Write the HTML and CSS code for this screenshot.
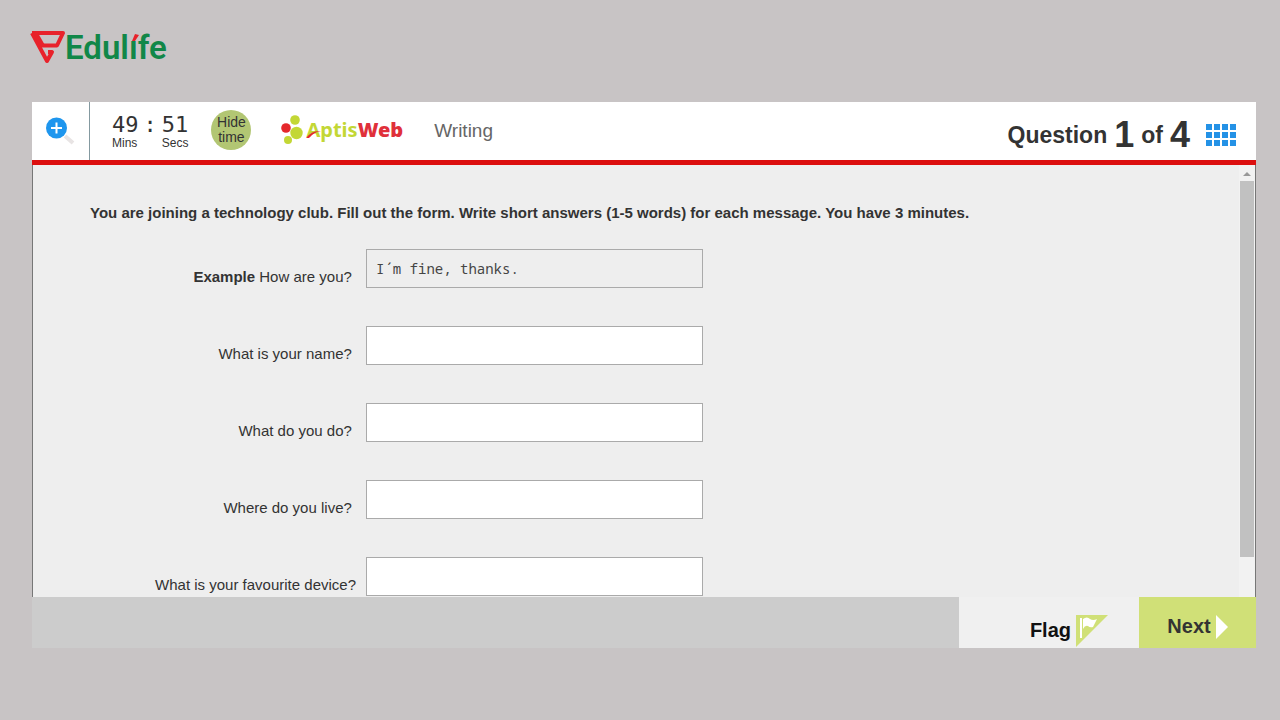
FILE: index.html
```html
<!DOCTYPE html>
<html lang="en">

<head>
    <meta charset="UTF-8">
    <meta name="viewport" content="width=device-width, initial-scale=1.0">
    <title>AptisWeb - Writing</title>
    <link rel="stylesheet" href="styles.css">
</head>

<body>
    <a class="brand" href="#" aria-label="Edulife">
        <svg class="brand-icon" width="38" height="34" viewBox="0 0 38 34" aria-hidden="true">
            <path d="M3 3H34L28 15.500H12" fill="none" stroke="#e8222b" stroke-width="4" stroke-linejoin="round" />
            <path d="M3 3L18 31L23 22H19" fill="none" stroke="#e8222b" stroke-width="4" stroke-linejoin="round" />
            <path d="M4 3H9L17 17H11Z" fill="#e8222b" />
        </svg>
        <span class="brand-name">Edul<span class="brand-i">ı<svg class="brand-accent" width="8" height="8" viewBox="0 0 8 8" aria-hidden="true"><path d="M4 0L8 1L4 7L1 7Z" fill="#e8222b" /></svg></span>fe</span>
    </a>

    <main class="test">
        <header class="test-header">
            <button class="zoom-btn" type="button" aria-label="Zoom">
                <svg width="30" height="30" viewBox="0 0 30 30" aria-hidden="true">
                    <path d="M19 20L27 27" stroke="#e8e4e4" stroke-width="4" />
                    <circle cx="10.500" cy="12" r="10.500" fill="#1e96ee" />
                    <path d="M10.500 6.500V17.500M5 12H16" stroke="#fff" stroke-width="2" />
                </svg>
            </button>
            <div class="timer">
                <div class="timer-part"><span class="digits">49</span><span class="unit">Mins</span></div>
                <span class="digits">:</span>
                <div class="timer-part"><span class="digits">51</span><span class="unit">Secs</span></div>
            </div>
            <button class="hide-btn" type="button">Hide time</button>
            <div class="aptis">
                <svg width="24" height="30" viewBox="0 0 24 30" aria-hidden="true">
                    <circle cx="5" cy="14" r="4.800" fill="#e5282c" />
                    <circle cx="14" cy="6" r="4.800" fill="#c3d735" />
                    <circle cx="15.500" cy="19" r="6.200" fill="#c3d735" />
                    <circle cx="7" cy="26" r="4" fill="#c3d735" />
                </svg>
                <span class="aptis-name">Aptis<b>Web</b>
                    <svg class="aptis-swoosh" width="16" height="10" viewBox="0 0 16 10" aria-hidden="true"><path d="M0 9Q6 1 15 2Q8 3 3 9Z" fill="#e5282c" /></svg>
                </span>
            </div>
            <span class="section-name">Writing</span>
            <div class="progress">Question <strong>1</strong> of <strong>4</strong></div>
            <button class="grid-btn" type="button" aria-label="All questions">
                <svg width="30" height="22" viewBox="0 0 30 22" aria-hidden="true">
                    <path d="M0 3H30M0 11H30M0 19H30" stroke="#2492e6" stroke-width="6" stroke-dasharray="6 2" />
                </svg>
            </button>
        </header>

        <div class="test-body">
            <form class="questions" id="answers">
                <h1>You are joining a technology club. Fill out the form. Write short answers (1-5 words) for each message. You have 3 minutes.</h1>
                <div class="row">
                    <label for="example"><b>Example</b> How are you?&nbsp;</label>
                    <input type="text" id="example" value="I´m fine, thanks." readonly>
                </div>
                <div class="row">
                    <label for="name">What is your name?&nbsp;</label>
                    <input type="text" id="name">
                </div>
                <div class="row">
                    <label for="job">What do you do?&nbsp;</label>
                    <input type="text" id="job">
                </div>
                <div class="row">
                    <label for="home">Where do you live?&nbsp;</label>
                    <input type="text" id="home">
                </div>
                <div class="row">
                    <label for="device">What is your favourite device?</label>
                    <input type="text" id="device">
                </div>
            </form>
            <div class="scrollbar" aria-hidden="true">
                <svg width="14" height="16" viewBox="0 0 14 16"><path d="M3 11L7 7L11 11Z" fill="#999" /></svg>
                <div class="scroll-thumb"></div>
            </div>
        </div>

        <footer class="test-footer">
            <button class="flag-btn" type="button">
                Flag
                <svg width="32" height="32" viewBox="0 0 32 32" aria-hidden="true">
                    <path d="M0 0H32L0 32Z" fill="#d0e077" />
                    <path d="M4 3H6V23H4ZM7 4Q11 1 14 4Q17 6 21 4L17 12Q14 13 12 11Q9 10 7 14Z" fill="#fff" />
                </svg>
            </button>
            <button class="next-btn" type="submit" form="answers">
                Next
                <svg width="12" height="24" viewBox="0 0 12 24" aria-hidden="true">
                    <path d="M0 0L12 12L0 24Z" fill="#fff" />
                </svg>
            </button>
        </footer>
    </main>
</body>

</html>
```
FILE: styles.css
```css
* {
    box-sizing: border-box;
}

body {
    display: flex;
    flex-direction: column;
    min-height: 100vh;
    margin: 0;
    padding: 28px 24px 72px 32px;
    background-color: #c8c4c5;
    color: #333;
    font-family: Arial, "Liberation Sans", sans-serif;
    font-size: 15px;
}

button {
    border: none;
    padding: 0;
    background: none;
    color: inherit;
    font-family: inherit;
    cursor: pointer;
}

svg {
    display: block;
    flex: none;
}

/* Logo above the test window */
.brand {
    display: flex;
    align-items: center;
    align-self: flex-start;
    height: 38px;
    margin: 0 0 36px -3px;
    color: #118748;
    text-decoration: none;
}

.brand-icon {
    margin-right: -2px;
}

.brand-name {
    font-family: Roboto, sans-serif;
    font-size: 33px;
    font-weight: 600;
}

.brand-i {
    position: relative;
}

.brand-accent {
    position: absolute;
    top: 6px;
    left: 2px;
}

.test {
    display: flex;
    flex: 1;
    flex-direction: column;
}

/* Top bar */
.test-header {
    display: flex;
    align-items: center;
    height: 63px;
    border-bottom: 5px solid #dc0f0f;
    background-color: #fff;
}

.zoom-btn {
    display: flex;
    align-items: center;
    justify-content: center;
    align-self: stretch;
    width: 58px;
    border-right: 1px solid #8499a0;
}

.timer {
    display: flex;
    gap: 5px;
    margin-left: 22px;
}

.timer-part {
    display: flex;
    flex-direction: column;
}

.digits {
    font-family: Consolas, "DejaVu Sans Mono", monospace;
    font-size: 22px;
    line-height: 24px;
}

.unit {
    font-size: 12px;
    line-height: 12px;
}

.hide-btn {
    width: 40px;
    height: 40px;
    margin: 0 30px 2px 23px;
    border-radius: 50%;
    background-color: #b2c673;
    font-size: 14px;
    line-height: 15px;
}

.aptis {
    display: flex;
    align-items: center;
    padding-bottom: 4px;
}

.aptis-name {
    position: relative;
    margin-left: 1px;
    color: #c3d735;
    font-family: "Noto Sans", sans-serif;
    font-size: 20px;
    font-weight: 700;
}

.aptis-name b {
    color: #e0303a;
}

.aptis-swoosh {
    position: absolute;
    top: 13px;
    left: 0;
}

.section-name {
    margin-left: 31px;
    color: #666;
    font-size: 19px;
}

.progress {
    display: flex;
    align-items: center;
    gap: 7px;
    margin-left: auto;
    padding-top: 8px;
    font-size: 23px;
    font-weight: bold;
}

.progress strong {
    font-size: 36px;
}

.grid-btn {
    margin: 8px 20px 0 16px;
}

/* Question area */
.test-body {
    display: flex;
    flex: 1;
    border: 1px solid #777;
    border-width: 0 1px;
    background-color: #eee;
}

.questions {
    flex: 1;
    padding: 38px 57px 0;
}

.questions h1 {
    margin: 0 0 26px;
    font-size: 15px;
    line-height: 20px;
}

.row {
    display: grid;
    grid-template-columns: 266px 337px;
    column-gap: 10px;
    margin-bottom: 38px;
}

.row:last-child {
    margin-bottom: 0;
}

.row label {
    padding-top: 18px;
    line-height: 20px;
    text-align: right;
}

.row input {
    height: 39px;
    border: 1px solid #aaa;
    padding: 0 9px;
    background-color: #fff;
    color: #444;
    font-family: Consolas, "Noto Sans Mono", "DejaVu Sans Mono", monospace;
    font-size: 14px;
}

.row input:read-only {
    background-color: #eee;
}

.scrollbar {
    display: flex;
    flex-direction: column;
    width: 16px;
    padding: 0 1px;
    background-color: #f2f2f2;
}

.scroll-thumb {
    flex: 0 0 87%;
    background-color: #c1c1c1;
}

/* Bottom bar */
.test-footer {
    display: flex;
    justify-content: flex-end;
    height: 51px;
    background-color: #ccc;
}

.flag-btn,
.next-btn {
    display: flex;
    align-items: center;
    font-size: 20px;
    font-weight: bold;
}

.flag-btn {
    justify-content: flex-end;
    gap: 5px;
    width: 180px;
    padding: 16px 31px 0 0;
    background-color: #f0f0f0;
    color: #111;
}

.next-btn {
    justify-content: center;
    gap: 5px;
    width: 117px;
    padding-top: 8px;
    background-color: #d0e077;
}
```
